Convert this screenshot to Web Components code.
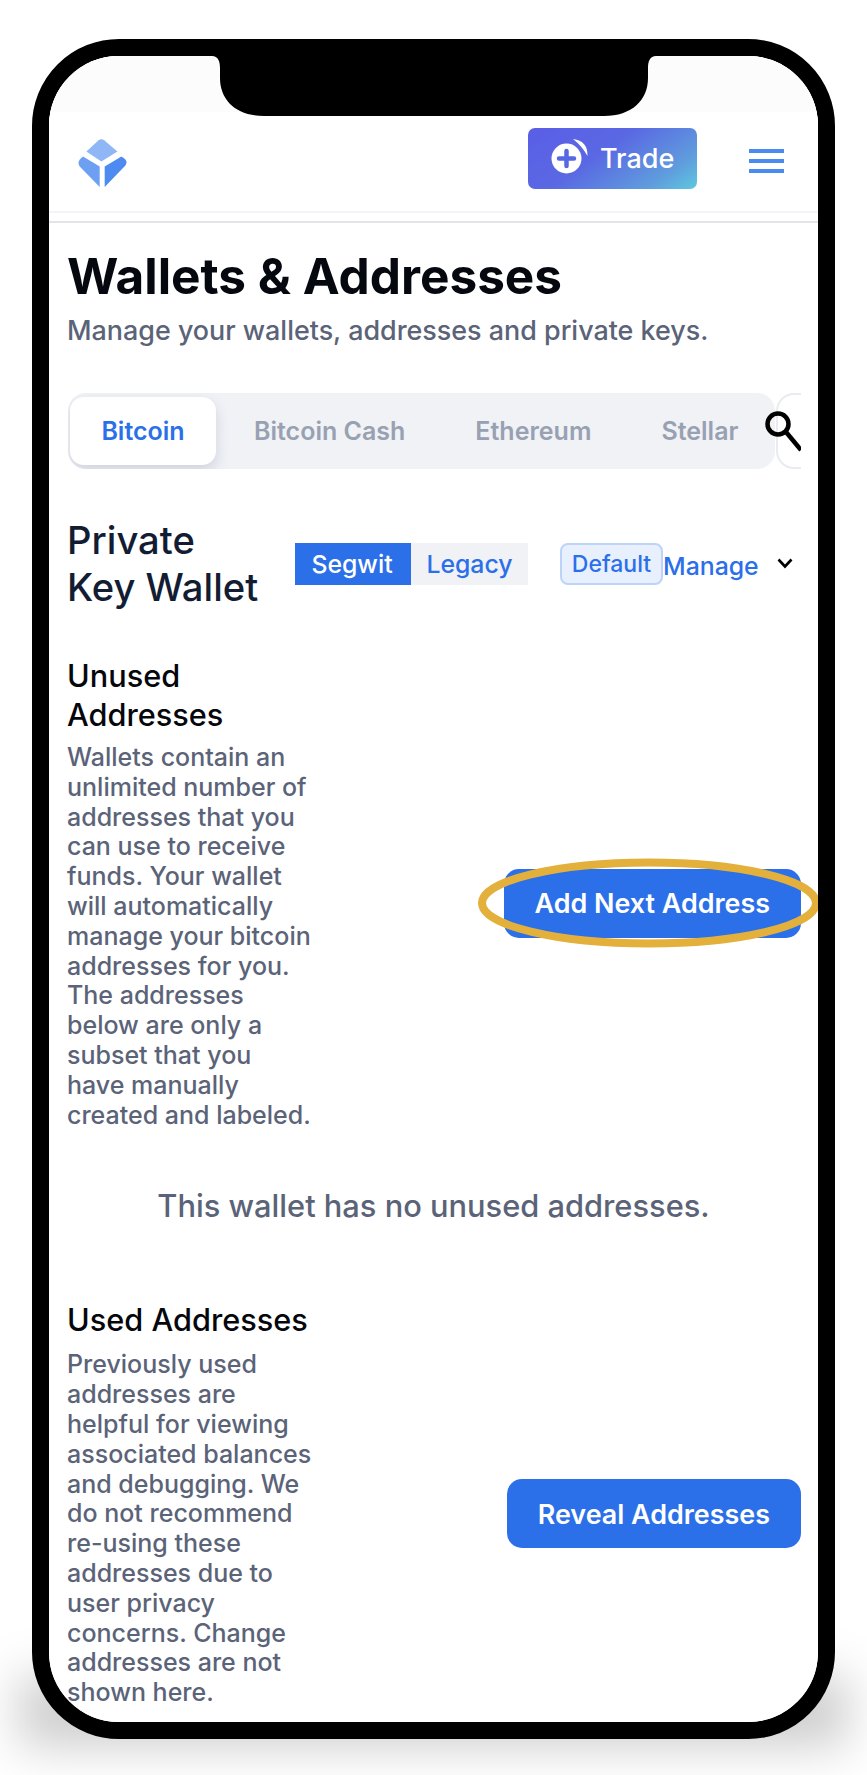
<!DOCTYPE html>
<html>
<head>
<meta charset="utf-8">
<title>Wallets &amp; Addresses</title>
<style>
  html { background: #fff; }
  body { margin: 0; padding: 0; width: 867px; height: 1775px; overflow: hidden; font-family: Inter, "Liberation Sans", sans-serif; }
</style>
</head>
<body>
<phone-frame>
  <app-header></app-header>
  <page-title heading="Wallets &amp; Addresses" sub="Manage your wallets, addresses and private keys."></page-title>
  <coin-tabs></coin-tabs>
  <wallet-head></wallet-head>
  <address-section heading="Unused Addresses">
    Wallets contain an unlimited number of addresses that you can use to receive funds. Your wallet will automatically manage your bitcoin addresses for you. The addresses below are only a subset that you have manually created and labeled.
    <primary-button slot="action" circled>Add Next Address</primary-button>
  </address-section>
  <empty-note>This wallet has no unused addresses.</empty-note>
  <address-section heading="Used Addresses" tight>
    Previously used addresses are helpful for viewing associated balances and debugging. We do not recommend re-using these addresses due to user privacy concerns. Change addresses are not shown here.
    <primary-button slot="action">Reveal Addresses</primary-button>
  </address-section>
</phone-frame>

<script>
// small helper, every element gets an open shadow root from its markup
function define(name, html) {
  let template = document.createElement('template');
  template.innerHTML = html;
  class El extends HTMLElement {
    constructor() {
      super();
      this.attachShadow({mode: 'open'});
      this.shadowRoot.append(template.content.cloneNode(true));
    }
    connectedCallback() {
      // attributes are copied to the elements marked with data-text
      this.shadowRoot.querySelectorAll('[data-text]').forEach(n => {
        n.textContent = this.getAttribute(n.dataset.text) || '';
      });
    }
  }
  customElements.define(name, El);
}

define('phone-frame', `
  <style>
    :host { display: block; width: 769px; height: 1666px; margin: 39px 0 0 32px; border: 17px solid #000; border-radius: 87px; position: relative; background: #fff; }
    :host::before { content: ""; position: absolute; left: -30px; right: -30px; bottom: -24px; height: 70px; background: rgba(0,0,0,.2); filter: blur(24px); z-index: -1; }
    .screen { height: 100%; border-radius: 70px; overflow: hidden; background: #fff; color: #000; }
    svg { position: absolute; left: 163px; top: 0; }
  </style>
  <div class="screen"><slot></slot></div>
  <svg width="444" height="60" viewBox="0 0 444 60"><path d="M0 0C6 0 8 5 8 12V22C8 44 24 60 52 60H392C420 60 436 44 436 22V12C436 5 438 0 444 0Z" fill="#000"/></svg>
`);

define('app-header', `
  <style>
    :host { display: block; }
    .status { height: 56px; background: #fcfcfc; }
    .bar { height: 99px; box-sizing: border-box; padding: 16px 34px 0 29px; display: flex; align-items: flex-start; background: #fff; }
    .logo { margin-top: 11px; }
    trade-button { margin-left: auto; }
    .menu { margin-left: 52px; margin-top: 21px; display: flex; flex-direction: column; gap: 6px; width: 35px; }
    .menu i { display: block; height: 4px; background: #4a8bf0; }
    .rule { height: 8px; background: #fff; border-top: 2px solid #f4f4f9; border-bottom: 2px solid #e4e4e7; }
  </style>
  <div class="status"></div>
  <div class="bar">
    <svg class="logo" width="49" height="48" viewBox="0 0 49 48">
      <path d="M20.6 1.2Q23.4-.8 26.2 1.2L39.4 12.4 23.4 22.4 8.4 12.4Z" fill="#8fb6f5"/>
      <path d="M5 17.4L21.7 27.4V48L1.7 27.4Q-1.8 22.4 5 17.4Z" fill="#6da0f3"/>
      <path d="M43.4 17.4Q50.8 21.4 47.4 26.4L26.7 48V27.4Z" fill="#4d8bf0"/>
    </svg>
    <trade-button></trade-button>
    <div class="menu"><i></i><i></i><i></i></div>
  </div>
  <div class="rule"></div>
`);

define('trade-button', `
  <style>
    :host { display: flex; align-items: center; box-sizing: border-box; width: 169px; height: 61px; padding-left: 23px; border-radius: 7px; background: linear-gradient(145deg, #5a5ee6 0%, #5a68e3 42%, #5f9ddd 80%, #5fc8de 100%); color: #fff; font: 500 27px Inter, sans-serif; }
    svg { margin-right: 11px; flex: none; margin-top: -3px; }
  </style>
  <svg width="38" height="38" viewBox="0 0 38 38">
    <circle cx="15.5" cy="20.5" r="15" fill="#fff"/>
    <path d="M15.5 13V28M8 20.5H23" stroke="#5668e2" stroke-width="4.5" stroke-linecap="round"/>
    <path d="M22 1Q37 3 36.5 18Q31 8 22 1Z" fill="#fff"/>
  </svg>
  <span>Trade</span>
`);

define('page-title', `
  <style>
    :host { display: block; padding: 20px 0 0 18px; }
    h1 { margin: 0; font: 700 49.5px/66px Inter, sans-serif; color: #05080f; }
    p { margin: 4px 0 0; font: 500 26.9px/34px Inter, sans-serif; color: #5b6378; }
  </style>
  <h1 data-text="heading"></h1>
  <p data-text="sub"></p>
`);

define('coin-tabs', `
  <style>
    :host { display: flex; margin: 46px 17px 0 19px; height: 76px; position: relative; }
    .tabs { flex: 1; display: flex; align-items: center; gap: 70px; height: 76px; padding: 0 0 0 2px; border-radius: 18px; background: #f0f2f6; font: 600 25px Inter, sans-serif; color: #98a1b2; white-space: nowrap; overflow: hidden; }
    .on { display: flex; align-items: center; justify-content: center; flex: none; width: 146px; height: 68px; margin-right: -32px; border-radius: 14px; background: #fff; color: #2b6fe9; box-shadow: 0 6px 14px rgba(60,70,110,.18); }
    .search { width: 25px; margin-left: 1px; overflow: hidden; }
    .search div { width: 60px; height: 76px; box-sizing: border-box; border: 2px solid #e9ebf0; border-radius: 18px; background: #fff; }
    svg { position: absolute; right: 0; top: 17px; }
  </style>
  <div class="tabs">
    <span class="on">Bitcoin</span>
    <span>Bitcoin Cash</span>
    <span>Ethereum</span>
    <span>Stellar</span>
  </div>
  <div class="search"><div></div></div>
  <svg width="36" height="42" viewBox="0 0 36 42" fill="none" stroke="#000" stroke-width="4.5"><circle cx="13" cy="14" r="10.5"/><path d="M21 22L36 40"/></svg>
`);

define('wallet-head', `
  <style>
    :host { display: flex; align-items: center; margin: 48px 17px 46px 18px; height: 94px; color: #2b6fe9; font: 500 24.8px Inter, sans-serif; }
    h2 { margin: 0; width: 228px; flex: none; font: 500 38.2px/47.5px Inter, sans-serif; color: #121d33; }
    .switch { display: flex; width: 233px; height: 42px; flex: none; background: #f0f2f6; }
    .switch span { display: flex; align-items: center; justify-content: center; }
    .seg { width: 116px; background: #2b6fe9; color: #fff; padding-right: 2px; box-sizing: border-box; }
    .leg { flex: 1; }
    .def { flex: none; margin-left: 32px; width: 103px; height: 42px; box-sizing: border-box; display: flex; align-items: center; justify-content: center; border: 2px solid #bcd4fa; border-radius: 8px; background: #e8f0fd; font-size: 23px; }
    .manage { margin-top: 3px; white-space: nowrap; }
    svg { margin-left: 18px; margin-top: -2px; flex: none; }
  </style>
  <h2>Private<br>Key Wallet</h2>
  <div class="switch"><span class="seg">Segwit</span><span class="leg">Legacy</span></div>
  <span class="def">Default</span>
  <span class="manage">Manage</span>
  <svg width="16" height="11" viewBox="0 0 16 11" fill="none" stroke="#000" stroke-width="2.6"><path d="M1.5 1.5L8 8.5L14.5 1.5"/></svg>
`);

define('address-section', `
  <style>
    :host { display: flex; align-items: center; justify-content: space-between; margin: 0 17px 0 18px; }
    .text { width: 248px; padding-bottom: 19.5px; }
    :host([tight]) .text { padding-bottom: 19px; }
    h3 { margin: 0 0 9px; font: 500 30.7px/38.5px Inter, sans-serif; color: #05070c; }
    :host([tight]) h3 { margin-bottom: 11px; }
    p { margin: 0; font: 500 25px/29.8px Inter, sans-serif; color: #5b6378; }
  </style>
  <div class="text">
    <h3 data-text="heading"></h3>
    <p><slot></slot></p>
  </div>
  <slot name="action"></slot>
`);

define('primary-button', `
  <style>
    :host { display: flex; align-items: center; justify-content: center; position: relative; height: 69px; padding: 0 31px; border-radius: 15px; background: #2b6fe9; color: #fff; font: 600 26.9px Inter, sans-serif; white-space: nowrap; }
    svg { display: none; position: absolute; left: -27px; top: -11px; }
    :host([circled]) svg { display: block; }
  </style>
  <slot></slot>
  <svg width="344" height="90" viewBox="0 0 344 90" fill="none"><ellipse cx="172" cy="45" rx="167" ry="40.5" stroke="#e3b03c" stroke-width="8"/></svg>
`);

define('empty-note', `
  <style>
    :host { display: block; text-align: center; padding: 38px 0 77px; font: 500 30.8px/36px Inter, sans-serif; color: #5b6378; }
  </style>
  <slot></slot>
`);
</script>
</body>
</html>
